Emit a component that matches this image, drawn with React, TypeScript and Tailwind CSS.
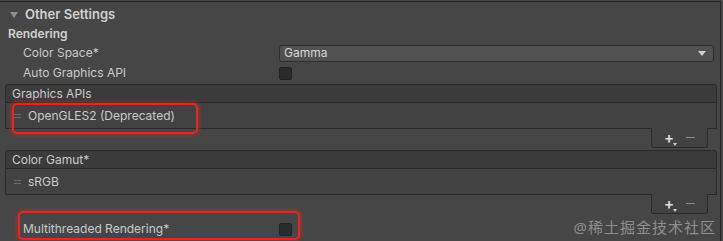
import React from 'react';

function Checkbox() {
  return <div className="w-[13px] h-[13px] rounded-[2px] bg-[#2b2b2b] border border-[#222222]" />;
}

function FieldRow({ label, children }: { label: string; children?: React.ReactNode }) {
  return (
    <div className="flex items-center h-[20px]">
      <div className="w-[279px] pl-[23px] shrink-0">{label}</div>
      <div className="flex-1 flex items-center">{children}</div>
    </div>
  );
}

function ReorderList({ title, item }: { title: string; item: string }) {
  return (
    <div className="ml-[5px] mr-[3px]">
      <div className="h-[19px] flex items-center pl-[6px] bg-[#3b3b3b] border border-[#2a2a2a] rounded-t-[3px]">
        {title}
      </div>
      <div className="h-[26px] flex items-center bg-[#424242] border-x border-b border-[#2a2a2a]">
        <span className="w-[22px] flex justify-center">
          <span className="flex flex-col gap-[2px]">
            <span className="block w-[7px] h-px bg-[#6a6a6a]" />
            <span className="block w-[7px] h-px bg-[#6a6a6a]" />
          </span>
        </span>
        <span>{item}</span>
      </div>
      <div className="flex justify-end pr-[9px]">
        <div className="w-[57px] h-[20px] -mt-px bg-[#424242] border-x border-b border-[#2a2a2a] rounded-b-[3px] flex items-center justify-around px-[6px]">
          <span className="relative text-[#e0e0e0] text-[15px] leading-none font-semibold">
            +
            <span className="absolute -right-[3px] bottom-[-1px] w-0 h-0 border-x-[2px] border-x-transparent border-t-[3px] border-t-[#d0d0d0]" />
          </span>
          <span className="block w-[9px] h-[1.5px] bg-[#8a8a8a]" />
        </div>
      </div>
    </div>
  );
}

export default function App() {
  return (
    <div
      className="relative w-[723px] h-[241px] overflow-hidden bg-[#464646] text-[#cacaca] text-[12px]"
      style={{ fontFamily: 'Inter, "Noto Sans", sans-serif' }}
    >
      <div className="mt-px mr-[2px] h-[240px] border-t border-r border-[#262626]">
        <div className="h-[22px] pt-[3px] flex items-center pl-[10px] gap-[7px] font-semibold text-[13px] text-[#d2d2d2]">
          <span className="w-0 h-0 border-x-[4px] border-x-transparent border-t-[6px] border-t-[#8c8c8c]" />
          Other Settings
        </div>
        <div className="h-[19px] flex items-center pl-[8px] font-semibold text-[#d2d2d2]">Rendering</div>
        <FieldRow label="Color Space*">
          <div className="w-[435px] h-[17px] rounded-[3px] bg-[#515151] border border-[#2e2e2e] flex items-center justify-between pl-[4px] pr-[7px] text-[#d8d8d8]">
            <span>Gamma</span>
            <span className="w-0 h-0 border-x-[4px] border-x-transparent border-t-[5px] border-t-[#d0d0d0]" />
          </div>
        </FieldRow>
        <FieldRow label="Auto Graphics API">
          <Checkbox />
        </FieldRow>
        <div className="h-[1px]" />
        <ReorderList title="Graphics APIs" item="OpenGLES2 (Deprecated)" />
        <div className="h-[2px]" />
        <ReorderList title="Color Gamut*" item="sRGB" />
        <div className="h-[5px]" />
        <FieldRow label="Multithreaded Rendering*">
          <Checkbox />
        </FieldRow>
      </div>

      <div className="absolute left-[12px] top-[103px] w-[186px] h-[31px] rounded-[5px] border-2 border-[#e3281f] shadow-[0_0_4px_1px_rgba(230,40,30,0.55)]" />
      <div className="absolute left-[18px] top-[211px] w-[282px] h-[29px] rounded-[5px] border-2 border-[#e3281f] shadow-[0_0_4px_1px_rgba(230,40,30,0.55)]" />

      <div
        className="absolute right-[7px] top-[216px] text-[15px] text-[#8e8e8e] tracking-[1px]"
        style={{ fontFamily: '"Noto Sans", "Noto Sans CJK SC", sans-serif' }}
      >
        @稀土掘金技术社区
      </div>
    </div>
  );
}
